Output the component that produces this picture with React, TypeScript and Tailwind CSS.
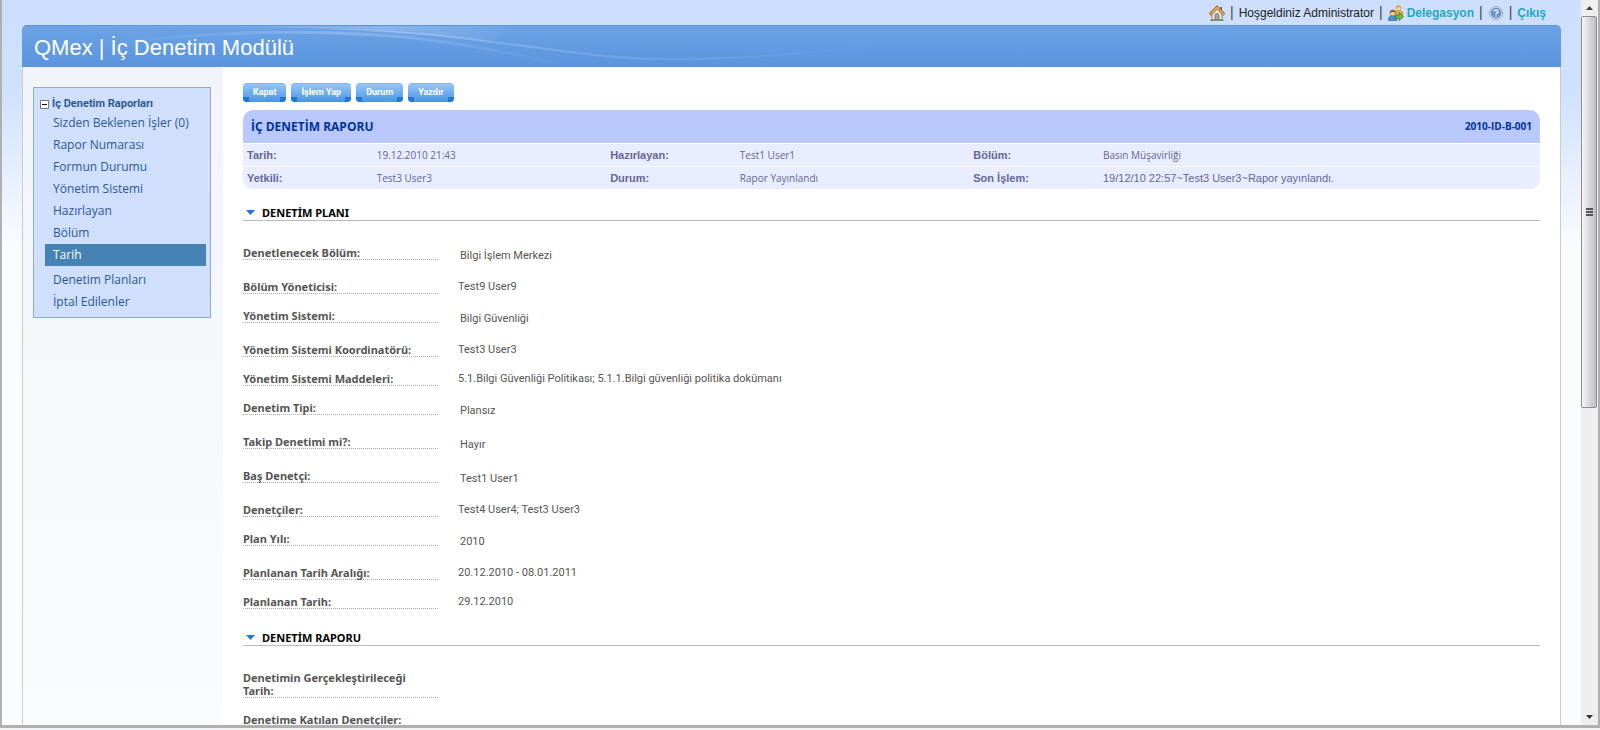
import { ReactNode } from "react";

type MenuItem = { label: string; active?: boolean };
type Field = { label: string; value?: string; boxed?: boolean };

const menuItems: MenuItem[] = [
  { label: "Sizden Beklenen İşler (0)" },
  { label: "Rapor Numarası" },
  { label: "Formun Durumu" },
  { label: "Yönetim Sistemi" },
  { label: "Hazırlayan" },
  { label: "Bölüm" },
  { label: "Tarih", active: true },
  { label: "Denetim Planları" },
  { label: "İptal Edilenler" },
];

const actions = ["Kapat", "İşlem Yap", "Durum", "Yazdır"];

const planFields: Field[] = [
  { label: "Denetlenecek Bölüm:", value: "Bilgi İşlem Merkezi", boxed: true },
  { label: "Bölüm Yöneticisi:", value: "Test9 User9" },
  { label: "Yönetim Sistemi:", value: "Bilgi Güvenliği", boxed: true },
  { label: "Yönetim Sistemi Koordinatörü:", value: "Test3 User3" },
  { label: "Yönetim Sistemi Maddeleri:", value: "5.1.Bilgi Güvenliği Politikası; 5.1.1.Bilgi güvenliği politika dokümanı" },
  { label: "Denetim Tipi:", value: "Plansız", boxed: true },
  { label: "Takip Denetimi mi?:", value: "Hayır", boxed: true },
  { label: "Baş Denetçi:", value: "Test1 User1", boxed: true },
  { label: "Denetçiler:", value: "Test4 User4; Test3 User3" },
  { label: "Plan Yılı:", value: "2010", boxed: true },
  { label: "Planlanan Tarih Aralığı:", value: "20.12.2010 - 08.01.2011" },
  { label: "Planlanan Tarih:", value: "29.12.2010" },
];

const reportFields: Field[] = [
  { label: "Denetimin Gerçekleştirileceği Tarih:" },
  { label: "Denetime Katılan Denetçiler:" },
];

function HomeIcon() {
  return (
    <svg className="h-4 w-4" viewBox="0 0 16 16" aria-hidden="true">
      <path d="M3 8v7h10V8L8 3z" fill="#f4efe4" stroke="#8d7b60" strokeWidth="1" />
      <path d="M11 2h2v4l-2-2z" fill="#b5532f" />
      <path d="M.8 9.600 8 2.400l7.200 7.200" fill="none" stroke="#8a5a1c" strokeWidth="3.200" />
      <path d="M1.200 9.300 8 2.500l6.800 6.800" fill="none" stroke="#e8ab62" strokeWidth="1.800" />
      <path d="M6 15v-4.600a2 2 0 0 1 4 0V15z" fill="#a5a5a5" stroke="#666" strokeWidth=".8" />
      <path d="M1.500 15.300h4.500M10 15.300h4.500" stroke="#5f9440" strokeWidth="1.400" />
    </svg>
  );
}

function DelegateIcon() {
  return (
    <svg className="h-4 w-4" viewBox="0 0 16 16" aria-hidden="true">
      <path d="M6.500 9c0-3 1.500-3.500 4-3.500s4.500 1 4.500 4z" fill="#f2a93b" stroke="#c07a1a" strokeWidth=".6" />
      <circle cx="10.500" cy="3.200" r="2.500" fill="#f8d79c" stroke="#c9912f" strokeWidth=".7" />
      <path d="M8 3c0-3.500 5-3.500 5 0-1.500-1-3.500-1-5 0z" fill="#e6a32c" />
      <path d="M.5 15.500c0-4 1.500-5 4-5s4.500 1 4.500 5z" fill="#4d8fd6" stroke="#2d62a5" strokeWidth=".6" />
      <circle cx="4.700" cy="8" r="2.800" fill="#f6cfa3" stroke="#9b6a3c" strokeWidth=".7" />
      <path d="M1.800 8c0-4.400 5.800-4.400 5.800 0C6 6.800 3.600 6.800 1.800 8z" fill="#8d5a2d" />
      <path d="M7.500 10h3.800V7.600l4.200 4-4.200 4v-2.300H7.500z" fill="#6cc04a" stroke="#2f7d1e" strokeWidth=".8" />
    </svg>
  );
}

function HelpIcon() {
  return (
    <svg className="h-4 w-4" viewBox="0 0 16 16" aria-hidden="true">
      <circle cx="8" cy="8" r="6.500" fill="#e6edf6" stroke="#93acce" strokeWidth="1" />
      <circle cx="8" cy="8" r="5" fill="#6b95cb" stroke="#4c79b4" strokeWidth=".6" />
      <path d="M6.200 6.600c0-2.400 3.700-2.300 3.700-.1C9.900 7.900 8 7.900 8 9.300M8 10.400v1.400" fill="none" stroke="#fff" strokeWidth="1.400" />
    </svg>
  );
}

function Separator() {
  return <span className="text-[14px] text-[#444]">|</span>;
}

function TopBar() {
  return (
    <nav className="flex h-[25px] items-center justify-end gap-[5px] pr-[15px] text-[12px] text-[#222]">
      <a href="#home" aria-label="Ana sayfa">
        <HomeIcon />
      </a>
      <Separator />
      <span>Hoşgeldiniz Administrator</span>
      <Separator />
      <a href="#delegasyon" className="flex items-center gap-[3px] font-bold text-[#21a9c4]">
        <DelegateIcon />
        Delegasyon
      </a>
      <Separator />
      <a href="#yardim" aria-label="Yardım">
        <HelpIcon />
      </a>
      <Separator />
      <a href="#cikis" className="font-bold text-[#21a9c4]">
        Çıkış
      </a>
    </nav>
  );
}

function TitleBar() {
  return (
    <header className="relative flex h-[42px] items-center overflow-hidden rounded-t-[5px] border-t border-[#5f93d3] bg-linear-to-b from-[#6ca3e6] to-[#5a94dd] px-3 pt-[2px]">
      <svg className="absolute top-0 left-0 h-[42px] w-[900px]" viewBox="0 0 900 42" fill="none" aria-hidden="true">
        <defs>
          <linearGradient id="sweep" x1="0" x2="1" y1="0" y2="0">
            <stop offset="0" stopColor="#fff" stopOpacity="0" />
            <stop offset=".5" stopColor="#fff" stopOpacity=".2" />
            <stop offset="1" stopColor="#fff" stopOpacity="0" />
          </linearGradient>
        </defs>
        <path d="M0 5C60 0 130 0 200 0 300 0 340 4 400 8 500 17 560 32 640 33 740 34 800 24 860 20" stroke="url(#sweep)" strokeWidth="2" />
        <path d="M80 18C220 2 320 4 400 13 470 21 510 33 560 42" stroke="url(#sweep)" strokeWidth="3" />
        <path d="M220 0C320 0 400 8 470 16 480 8 490 4 500 0z" fill="url(#sweep)" />
      </svg>
      <h1 className="text-[22px] leading-6 text-white">QMex | İç Denetim Modülü</h1>
    </header>
  );
}

function SideMenu() {
  return (
    <aside className="w-[200px] shrink-0 bg-linear-to-b from-[#f1f4f9] to-[#fbfcfe] pt-5 pr-3 pl-[10px]">
      <nav className="border border-[#8fadc2] bg-[#cfdffc] pt-[9px] pr-1 pb-1 pl-[6px] font-['Open_Sans',sans-serif] text-[12px] text-[#2d5a96]">
        <div className="flex h-[15px] items-center gap-[3px] font-['Roboto',sans-serif] text-[11px] font-bold">
          <svg className="h-[9px] w-[9px]" viewBox="0 0 9 9" aria-hidden="true">
            <path d="M.5.5h8v8h-8z" fill="#fff" stroke="#777" />
            <path d="M2 4.500h5" stroke="#000" />
          </svg>
          İç Denetim Raporları
        </div>
        <ul className="ml-[5px]">
          {menuItems.map((item) => (
            <li key={item.label}>
              <a
                href="#menu"
                className={
                  item.active
                    ? "mb-[3px] block bg-[#4682b4] px-2 leading-[22px] text-white"
                    : "block px-2 leading-[22px]"
                }
              >
                {item.label}
              </a>
            </li>
          ))}
        </ul>
      </nav>
    </aside>
  );
}

function ActionButton({ children }: { children: ReactNode }) {
  return (
    <button
      type="button"
      className="relative h-[19px] overflow-hidden rounded-[4px] border-t border-[#7db8f5] bg-linear-to-b from-[#93c6fd] to-[#4b93e0] px-[10px] font-['Roboto',sans-serif] text-[9px] font-bold text-white"
    >
      <span className="absolute bottom-0 left-0 h-[5px] w-[6px] bg-[#1f78d2]" />
      <span className="absolute right-0 bottom-0 h-[5px] w-[6px] bg-[#1f78d2]" />
      {children}
    </button>
  );
}

function SummaryTable() {
  const label = "h-[23px] w-[10%] border-t border-white px-1 text-left text-[11px] font-bold";
  const value = "border-t border-white px-1 font-['Open_Sans',sans-serif] text-[10px]";
  return (
    <section className="mt-2 overflow-hidden rounded-[10px] text-[#666699]">
      <div className="flex h-[33px] items-center justify-between bg-[#b9c9fe] px-2 font-['Open_Sans',sans-serif] font-bold text-[#003399]">
        <h2 className="text-[12px]">İÇ DENETİM RAPORU</h2>
        <span className="text-[10px]">2010-ID-B-001</span>
      </div>
      <table className="w-full table-fixed border-separate border-spacing-0 bg-[#e8edff]">
        <tbody>
          <tr>
            <th className={label}>Tarih:</th>
            <td className={`w-[18%] ${value}`}>19.12.2010 21:43</td>
            <th className={label}>Hazırlayan:</th>
            <td className={`w-[18%] ${value}`}>Test1 User1</td>
            <th className={label}>Bölüm:</th>
            <td className={value}>Basın Müşavirliği</td>
          </tr>
          <tr>
            <th className={label}>Yetkili:</th>
            <td className={value}>Test3 User3</td>
            <th className={label}>Durum:</th>
            <td className={value}>Rapor Yayınlandı</td>
            <th className={label}>Son İşlem:</th>
            <td className="border-t border-white px-1 text-[11px]">19/12/10 22:57~Test3 User3~Rapor yayınlandı.</td>
          </tr>
        </tbody>
      </table>
    </section>
  );
}

function FormSection({ title, fields }: { title: string; fields: Field[] }) {
  return (
    <section className="font-['Noto_Sans',sans-serif] text-[11px] leading-[13px] text-[#555]">
      <h3 className="flex h-[22px] items-center gap-[7px] border-b border-[#bbb] pt-[5px] pl-[3px] font-bold text-black">
        <svg className="h-[5px] w-[9px]" viewBox="0 0 9 5" aria-hidden="true">
          <path d="M0 0h9L4.500 5z" fill="#1f74e8" />
        </svg>
        {title}
      </h3>
      <dl className="pt-[25px]">
        {fields.map((field) => (
          <div key={field.label} className={field.boxed ? "flex items-start gap-5 pb-5" : "flex items-start gap-5 pb-[15px]"}>
            <dt className="w-[195px] shrink-0 border-b border-dotted border-[#aaa] font-bold">{field.label}</dt>
            <dd className={field.boxed ? "-mb-[3px] pt-[3px] pl-[2px] font-['Roboto',sans-serif]" : "font-['Roboto',sans-serif]"}>
              {field.value}
            </dd>
          </div>
        ))}
      </dl>
    </section>
  );
}

function ScrollBar() {
  return (
    <div className="flex w-[17px] shrink-0 flex-col bg-[#eee] pr-px" aria-hidden="true">
      <div className="flex h-4 items-center justify-center">
        <svg className="h-1 w-[7px]" viewBox="0 0 7 4">
          <path d="M0 4h7L3.500 0z" fill="#444" />
        </svg>
      </div>
      <div className="flex h-[54%] flex-col items-center justify-center gap-px rounded-[2px] border border-[#8e8e8e] bg-linear-to-r from-[#f6f6f6] to-[#bdbec2]">
        <span className="h-[2px] w-[7px] bg-[#555]" />
        <span className="h-[2px] w-[7px] bg-[#555]" />
        <span className="h-[2px] w-[7px] bg-[#555]" />
      </div>
      <div className="flex flex-1 items-end justify-center pb-[6px]">
        <svg className="h-1 w-[7px]" viewBox="0 0 7 4">
          <path d="M0 0h7L3.500 4z" fill="#333" />
        </svg>
      </div>
    </div>
  );
}

export default function App() {
  return (
    <div className="flex h-screen flex-col bg-[#f4f4f4] pb-[2px] font-['Liberation_Sans',Arial,sans-serif]">
      <div className="flex min-h-0 flex-1 border-x-2 border-b-[3px] border-[#b0b0b0]">
        <div className="flex min-w-0 flex-1 flex-col overflow-hidden bg-[#fbfcfe] bg-[linear-gradient(to_bottom,#cddffc_0px,#cfe1fc_90px,#fbfcfe_250px)] px-5">
          <TopBar />
          <TitleBar />
          <div className="flex min-h-0 flex-1 border-x border-[#ccc] bg-white">
            <SideMenu />
            <main className="min-w-0 flex-1 px-5 pt-4">
              <div className="flex gap-[5px]">
                {actions.map((action) => (
                  <ActionButton key={action}>{action}</ActionButton>
                ))}
              </div>
              <SummaryTable />
              <div className="pt-[10px]">
                <FormSection title="DENETİM PLANI" fields={planFields} />
                <FormSection title="DENETİM RAPORU" fields={reportFields} />
              </div>
            </main>
          </div>
        </div>
        <ScrollBar />
      </div>
    </div>
  );
}
